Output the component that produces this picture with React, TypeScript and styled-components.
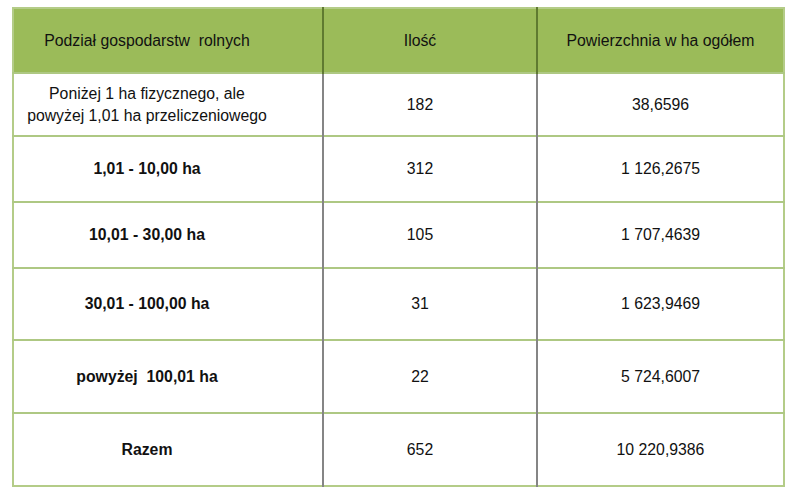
import React from 'react'
import styled, { createGlobalStyle } from 'styled-components'

const GlobalStyle = createGlobalStyle`
  html, body {
    margin: 0;
    padding: 0;
    background: #ffffff;
  }
  body {
    font-family: "Liberation Sans", Arial, sans-serif;
    color: #111111;
  }
`

const Page = styled.div`
  padding: 7px 0 0 12px;
`

const Table = styled.table`
  border-collapse: collapse;
  table-layout: fixed;
  border: 2px solid #b4cc88;
  font-size: 15.8px;
`

const Col = styled.col<{ w: number }>`
  width: ${({ w }) => w}px;
`

const HeadRow = styled.tr`
  height: 65px;
  background: #9bbb59;
`

const Row = styled.tr<{ h: number }>`
  height: ${({ h }) => h}px;
  border-top: 2px solid #aec883;
`

const HeadCell = styled.th<{ pr?: number }>`
  box-sizing: border-box;
  font-weight: normal;
  text-align: center;
  padding: 0 ${({ pr }) => pr || 0}px 0 0;
  white-space: pre;
  border-left: 2px solid #5f7a30;
  &:first-child {
    border-left: none;
  }
`

const LabelCell = styled.td<{ bold?: boolean }>`
  box-sizing: border-box;
  text-align: center;
  padding: 0 42px 0 0;
  font-weight: ${({ bold }) => (bold ? 'bold' : 'normal')};
  line-height: 22px;
  white-space: pre;
`

const NumCell = styled.td<{ pr?: number }>`
  box-sizing: border-box;
  text-align: center;
  padding: 0 ${({ pr }) => pr || 0}px 0 0;
  border-left: 2px solid #858585;
`

const rows = [
  { label: 'Poniżej 1 ha fizycznego, ale\npowyżej 1,01 ha przeliczeniowego', bold: false, count: '182', area: '38,6596', h: 63 },
  { label: '1,01 - 10,00 ha', bold: true, count: '312', area: '1 126,2675', h: 66 },
  { label: '10,01 - 30,00 ha', bold: true, count: '105', area: '1 707,4639', h: 66 },
  { label: '30,01 - 100,00 ha', bold: true, count: '31', area: '1 623,9469', h: 72 },
  { label: 'powyżej  100,01 ha', bold: true, count: '22', area: '5 724,6007', h: 73 },
  { label: 'Razem', bold: true, count: '652', area: '10 220,9386', h: 73 },
]

export default function App() {
  return (
    <Page>
      <GlobalStyle />
      <Table>
        <colgroup>
          <Col w={310} />
          <Col w={214} />
          <Col w={247} />
        </colgroup>
        <thead>
          <HeadRow>
            <HeadCell pr={42}>Podział gospodarstw  rolnych</HeadCell>
            <HeadCell pr={20}>Ilość</HeadCell>
            <HeadCell>Powierzchnia w ha ogółem</HeadCell>
          </HeadRow>
        </thead>
        <tbody>
          {rows.map((r) => (
            <Row key={r.label} h={r.h}>
              <LabelCell bold={r.bold}>{r.label}</LabelCell>
              <NumCell pr={20}>{r.count}</NumCell>
              <NumCell>{r.area}</NumCell>
            </Row>
          ))}
        </tbody>
      </Table>
    </Page>
  )
}
